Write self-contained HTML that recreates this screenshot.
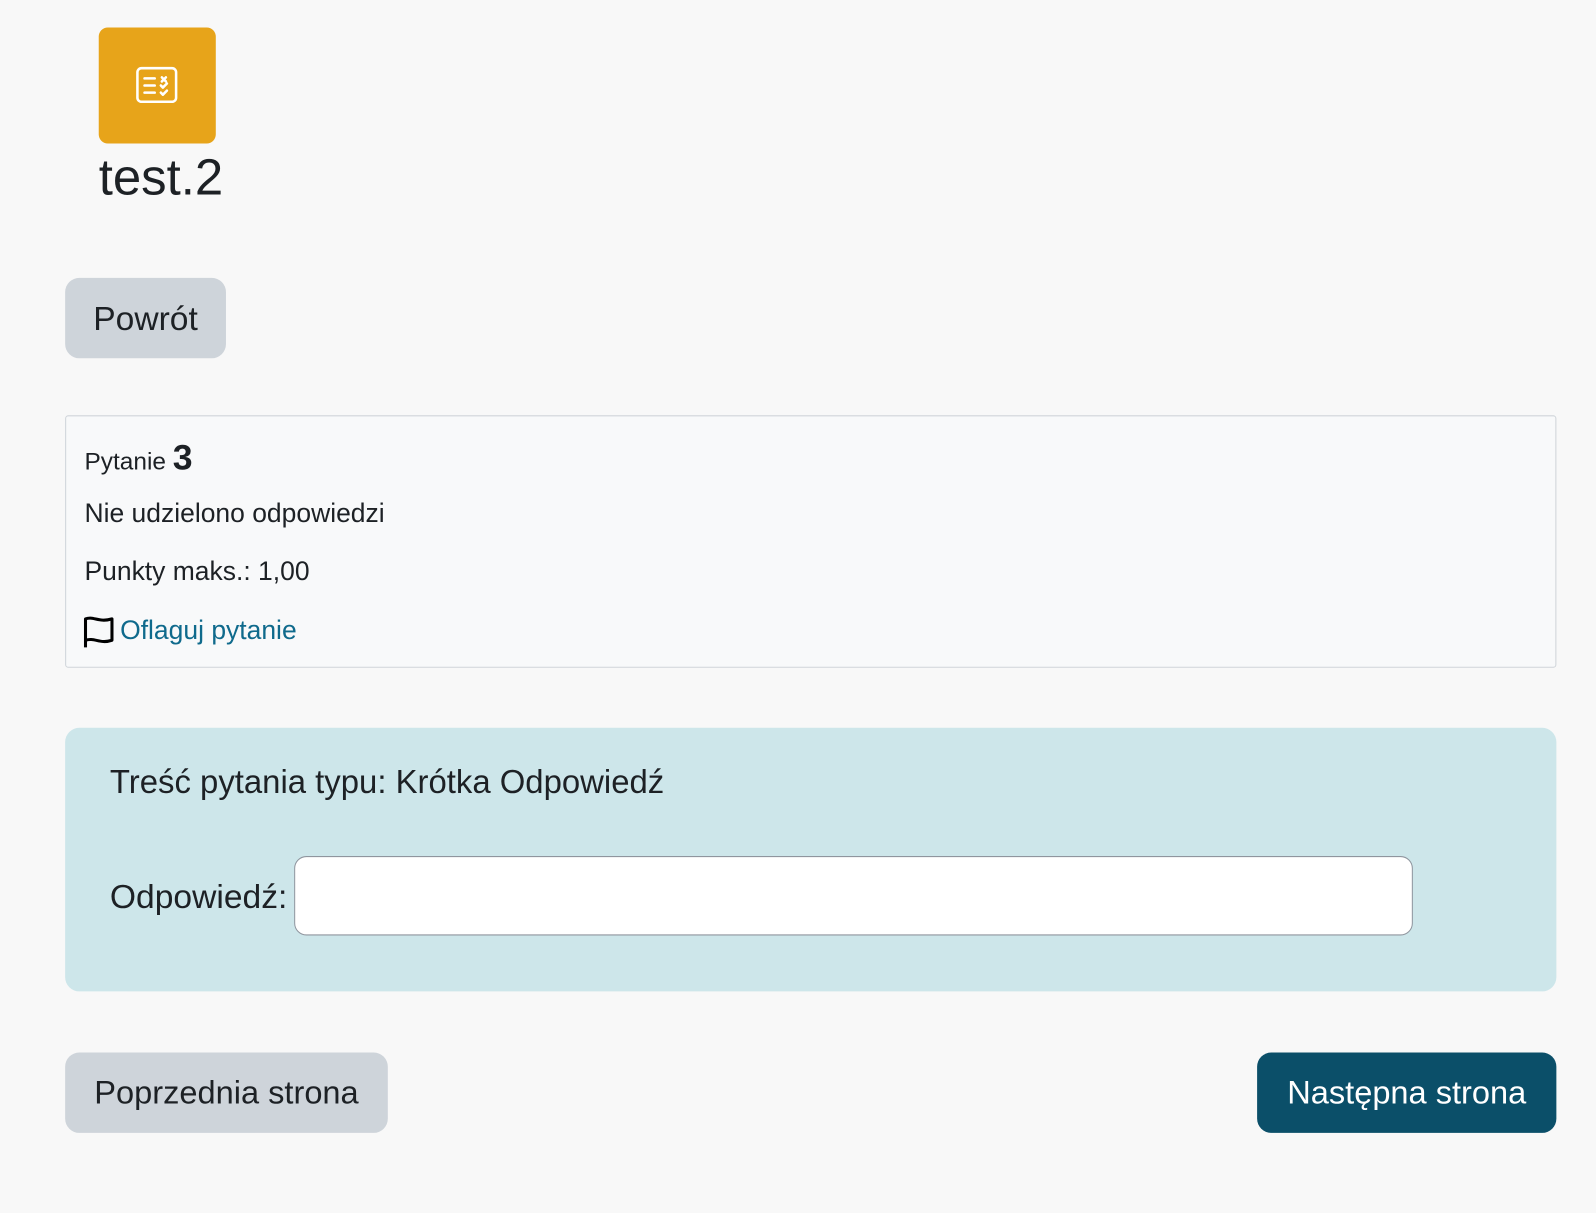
<!DOCTYPE html>
<html><head><meta charset="utf-8"><style>
body{margin:0;width:1596px;height:1213px;background:#f8f8f8;font-family:"Liberation Sans",sans-serif;color:#1d2125;position:relative;overflow:hidden}
#w{position:absolute;left:0;top:0;width:1568px;height:1192px;transform:scale(1.0179);transform-origin:0 0}
.a{position:absolute;white-space:nowrap;line-height:1.15}
.btn{position:absolute;border-radius:14px;display:flex;align-items:center;justify-content:center;font-size:32px}
</style></head><body><div id="w">
<div class="a" style="left:97px;top:27px;width:115px;height:114px;background:#e7a41a;border-radius:9px">
<svg width="115" height="114" viewBox="0 0 115 114"><g fill="none" stroke="#fff" stroke-width="2.5" stroke-linecap="round" stroke-linejoin="round"><rect x="38" y="40" width="38" height="33" rx="4"/><path d="M45 50h10M45 57h10M45 64h10M62 49l4 4M66 49l-4 4M61 57l2 2 4-4M61 64l2 2 4-4"/></g></svg></div>
<div class="a" style="left:97px;top:146px;font-size:50px">test.2</div>
<div class="btn" style="left:64px;top:273px;width:158px;height:79px;background:#ced4da;font-size:33px">Powrót</div>
<div class="a" style="left:64px;top:408px;width:1463px;height:246px;border:1px solid #cfd4d9;border-radius:3px;background:#f8f9fa"></div>
<div class="a" style="left:83px;top:430px;font-size:24px">Pytanie <b style="font-size:35px">3</b></div>
<div class="a" style="left:83px;top:490px;font-size:26px">Nie udzielono odpowiedzi</div>
<div class="a" style="left:83px;top:547px;font-size:26px">Punkty maks.: 1,00</div>
<svg class="a" style="left:81px;top:605px" width="32" height="32" viewBox="0 0 32 32"><path d="M3 31V3c8-3 13 4 26 0v21c-12 4-17-3-26 0" fill="none" stroke="#000" stroke-width="3" stroke-linejoin="round"/></svg>
<div class="a" style="left:118px;top:605px;font-size:26px;color:#0f6a8c">Oflaguj pytanie</div>
<div class="a" style="left:64px;top:715px;width:1465px;height:259px;background:#cde6ea;border-radius:14px"></div>
<div class="a" style="left:108px;top:750px;font-size:32.3px">Treść pytania typu: Krótka Odpowiedź</div>
<div class="a" style="left:108px;top:862px;font-size:33px">Odpowiedź:</div>
<div class="a" style="left:289px;top:841px;width:1097px;height:76px;background:#fff;border:1.5px solid #8f959e;border-radius:12px"></div>
<div class="btn" style="left:64px;top:1034px;width:317px;height:79px;background:#ced4da">Poprzednia strona</div>
<div class="btn" style="left:1235px;top:1034px;width:294px;height:79px;background:#0b4f69;color:#fff">Następna strona</div>
</div></body></html>
